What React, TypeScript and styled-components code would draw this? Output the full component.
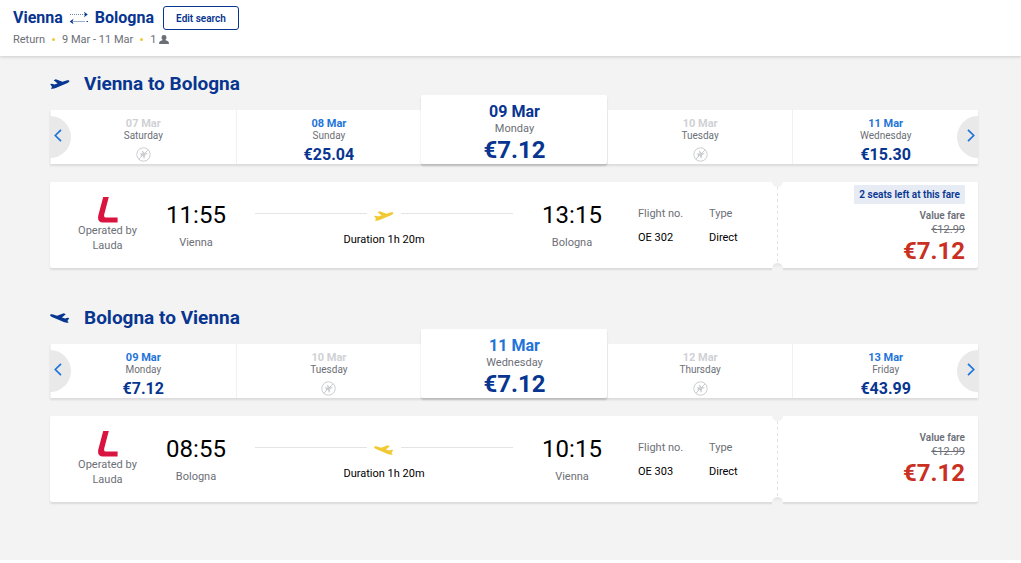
import React from "react";
import styled, { createGlobalStyle } from "styled-components";

const navy = "#073590";
const blue = "#1e74d8";
const grey = "#6c6f76";
const yellow = "#f1c933";

const GlobalStyle = createGlobalStyle`
  *, *::before, *::after { box-sizing: border-box; }
  body {
    margin: 0;
    background: #fff;
    color: #000;
    font-family: Roboto, "Liberation Sans", sans-serif;
    font-size: 11px;
    line-height: 16px;
  }
  h1, h2, p, dl, dt, dd, ul { margin: 0; padding: 0; }
  button { font-family: inherit; cursor: pointer; }
  svg { display: block; flex: none; }
`;

const Header = styled.header`
  position: relative;
  background: #fff;
  padding: 6px 13px 8px;
  box-shadow: 0 1px 3px rgba(0, 0, 0, 0.16);
`;

const TitleRow = styled.div`
  display: flex;
  align-items: center;
  gap: 9px;
`;

const RouteTitle = styled.h1`
  display: flex;
  align-items: center;
  gap: 6px;
  font-size: 16px;
  line-height: 24px;
  font-weight: 700;
  color: ${navy};
`;

const EditButton = styled.button`
  min-width: 76px;
  height: 24px;
  padding: 0 12px;
  border: 1px solid ${navy};
  border-radius: 3px;
  background: #fff;
  color: ${navy};
  font-size: 10px;
  font-weight: 600;
`;

const TripMeta = styled.p`
  display: flex;
  align-items: center;
  margin-top: 2px;
  color: ${grey};
`;

const Dot = styled.span`
  width: 3px;
  height: 3px;
  margin: 0 7px 2px;
  border-radius: 50%;
  background: ${yellow};
`;

const Passengers = styled.span`
  display: flex;
  align-items: center;
  gap: 3px;

  svg { margin-bottom: 2px; }
`;

const Main = styled.main`
  display: flex;
  flex-direction: column;
  gap: 38px;
  padding: 16px 43px 58px 50px;
  background: #f3f3f3;
`;

const JourneyHeading = styled.h2`
  display: flex;
  align-items: center;
  gap: 14px;
  margin-bottom: 14px;
  font-size: 19px;
  line-height: 24px;
  font-weight: 700;
  color: ${navy};
`;

const Carousel = styled.div`
  position: relative;
`;

const DateList = styled.ul`
  display: grid;
  grid-template-columns: repeat(5, 1fr);
  align-items: end;
  list-style: none;
  background: #fff;
  box-shadow: 0 2px 2px rgba(0, 0, 0, 0.1);
`;

const DateCard = styled.button<{ $selected?: boolean }>`
  position: relative;
  display: flex;
  flex-direction: column;
  align-items: center;
  width: 100%;
  height: ${(p) => (p.$selected ? 69 : 54)}px;
  margin-top: ${(p) => (p.$selected ? -15 : 0)}px;
  padding: ${(p) => (p.$selected ? 7 : 8)}px 0 0;
  border: 0;
  border-left: 1px solid ${(p) => (p.$selected ? "#fff" : "#f1f1f1")};
  border-radius: ${(p) => (p.$selected ? 2 : 0)}px;
  background: #fff;
  box-shadow: ${(p) => (p.$selected ? "0 2px 2px rgba(0, 0, 0, 0.16)" : "none")};
  z-index: ${(p) => (p.$selected ? 1 : 0)};
`;

const DateText = styled.span<{ $selected?: boolean; $color: string }>`
  font-size: ${(p) => (p.$selected ? 16 : 11)}px;
  line-height: ${(p) => (p.$selected ? 19 : 12)}px;
  font-weight: 700;
  color: ${(p) => p.$color};
`;

const WeekdayText = styled.span<{ $selected?: boolean }>`
  font-size: ${(p) => (p.$selected ? 11 : 10)}px;
  line-height: ${(p) => (p.$selected ? 16 : 12)}px;
  color: ${grey};
`;

const PriceText = styled.span<{ $selected?: boolean }>`
  font-size: ${(p) => (p.$selected ? 24 : 16)}px;
  line-height: ${(p) => (p.$selected ? 27 : 26)}px;
  font-weight: 700;
  color: ${navy};
`;

const NoFlight = styled.span`
  padding-top: 5px;
`;

const ArrowButton = styled.button<{ $side: "left" | "right" }>`
  position: absolute;
  z-index: 2;
  top: 6px;
  ${(p) => p.$side}: 0;
  display: grid;
  place-items: center;
  width: 21px;
  height: 42px;
  padding: 0 0 3px;
  padding-${(p) => p.$side === "left" ? "right" : "left"}: 6px;
  border: 0;
  border-radius: ${(p) => (p.$side === "left" ? "0 21px 21px 0" : "21px 0 0 21px")};
  background: #e9e9e9;
`;

const Ticket = styled.article`
  position: relative;
  display: flex;
  min-height: 86px;
  margin-top: 18px;
  border-radius: 2px;
  background: #fff;
  box-shadow: 0 2px 2px rgba(0, 0, 0, 0.1);
`;

const Operator = styled.div`
  display: flex;
  flex-direction: column;
  align-items: center;
  width: 115px;
  padding-top: 15px;
  line-height: 15px;
  text-align: center;
  color: ${grey};
`;

const Stop = styled.div`
  width: 62px;
  padding-top: 19px;
  text-align: center;
`;

const StopTime = styled.p`
  font-size: 24px;
  line-height: 28px;
`;

const StopCity = styled.p`
  margin-top: 6px;
  color: ${grey};
`;

const Path = styled.div`
  flex: 1;
  padding: 26px 28px 0;
  text-align: center;
`;

const PathLine = styled.div`
  display: flex;
  align-items: center;
  gap: 7px;
  height: 15px;
  margin-bottom: 9px;

  &::before, &::after {
    content: "";
    flex: 1;
    height: 1px;
    margin-bottom: 5px;
    background: #e4e4e4;
  }
`;

const Details = styled.dl`
  display: grid;
  grid-template-columns: 71px 68px;
  align-content: start;
  padding: 24px 0 0 35px;
`;

const Detail = styled.div`
  dt { color: ${grey}; }
  dd { margin-top: 8px; }
`;

const Fare = styled.div`
  position: relative;
  display: flex;
  flex-direction: column;
  align-items: flex-end;
  justify-content: center;
  width: 201px;
  padding-right: 13px;
  color: ${grey};
  line-height: 14px;
`;

const Perforation = styled.span`
  position: absolute;
  top: 5px;
  bottom: 5px;
  left: 0;
  width: 1px;
  background: repeating-linear-gradient(#e3e3e3 0 3px, transparent 3px 6px);
`;

const Notch = styled.span<{ $edge: "top" | "bottom" }>`
  position: absolute;
  ${(p) => p.$edge}: -5px;
  left: -5px;
  width: 11px;
  height: 10px;
  border-radius: ${(p) => (p.$edge === "top" ? "0 0 6px 6px" : "6px 6px 0 0")};
  background: ${(p) => (p.$edge === "top" ? "#f3f3f3" : "linear-gradient(#e2e2e2, #f3f3f3 5px)")};
`;

const SeatsBadge = styled.p`
  margin-bottom: 5px;
  padding: 0 5px;
  border-radius: 1px;
  background: #e6ebf4;
  color: ${navy};
  font-size: 10px;
  line-height: 19px;
  font-weight: 600;
`;

const FareName = styled.p`
  font-size: 10px;
  font-weight: 600;
`;

const FarePrice = styled.p`
  color: #c9301f;
  font-size: 24px;
  line-height: 28px;
  font-weight: 700;
`;

const Plane = ({ color, mirrored }: { color: string; mirrored?: boolean }) => (
  <svg width="20" height="10" viewBox="0 0 20 10" aria-hidden="true">
    <path
      transform={mirrored ? "translate(19.5 0) scale(-1 1)" : undefined}
      fill={color}
      d="M.2 5.1 2 4.7 4.300 5.600 7.600 4.400 3.700 1.200 5.800.3 12.400 2.700 16.400 1.400C18.200.9 19.400 1.200 19.400 2.100 19.400 3 18.200 3.800 17 4.300L11.600 6.600 5.800 9C4 9.700 2 9.900.8 9.400L2.100 8Z"
    />
  </svg>
);

const SwapArrows = () => (
  <svg width="20" height="14" viewBox="0 0 20 14" fill="none" stroke={navy} aria-hidden="true">
    <path d="M1 3.500H16" strokeDasharray="1 1" opacity=".6" />
    <path d="M15 .8 18.800 3.500 15 6.200 16 3.500Z" fill={navy} stroke="none" />
    <path d="M4 10.500H16" opacity=".4" />
    <path d="M17.500 10.500H19" />
    <path d="M4.500 7.800.7 10.500 4.500 13.200 3.500 10.500Z" fill={navy} stroke="none" />
  </svg>
);

const Person = () => (
  <svg width="10" height="9" viewBox="0 0 10 9" fill={grey} aria-hidden="true">
    <path d="M5 0a2.500 2.500 0 0 1 2.500 2.600C7.500 3.800 6.900 4.700 6.300 5.100L9 6.200Q10 6.700 10 9H0Q0 6.700 1 6.200L3.700 5.100C3.100 4.700 2.500 3.800 2.500 2.600A2.500 2.500 0 0 1 5 0Z" />
  </svg>
);

const NoFlightIcon = () => (
  <svg width="15" height="15" viewBox="0 0 15 15" fill="none" stroke="#cbcdd0" role="img" aria-label="No flights">
    <circle cx="7.500" cy="7.500" r="6.700" />
    <path d="M2.800 12.200 12.200 2.800" />
    <path fill="#cbcdd0" stroke="none" d="M3.600 6.200 6.800 6.600 5.800 4 6.700 3.700 8.800 6.300 11.300 5.900 11.500 6.800 9.100 8 8.600 11.300 7.700 11.500 6.900 8.700 4.400 9.600 5 8Z" />
  </svg>
);

const LaudaLogo = () => (
  <svg width="20" height="26" viewBox="0 0 20 26" fill="#d9143f" role="img" aria-label="Lauda">
    <path d="M5.200 0H10.800L6.200 17.600Q5.600 20.500 8 20.500H19.600V25.600H5Q-1 25.400.3 18.400Z" />
  </svg>
);

const Chevron = ({ side }: { side: "left" | "right" }) => (
  <svg width="8" height="13" viewBox="0 0 8 13" fill="none" stroke={blue} strokeWidth="1.700" aria-hidden="true">
    <path d={side === "left" ? "M7 .8 1.300 6.500 7 12.200" : "M1 .8 6.700 6.500 1 12.200"} />
  </svg>
);

type Day = { date: string; weekday: string; price?: string; selected?: boolean; color?: string };
type Journey = {
  from: string; to: string; inbound?: boolean; days: Day[];
  departs: string; arrives: string; flight: string; badge?: string;
};

const journeys: Journey[] = [
  {
    from: "Vienna", to: "Bologna", departs: "11:55", arrives: "13:15", flight: "OE 302",
    badge: "2 seats left at this fare",
    days: [
      { date: "07 Mar", weekday: "Saturday" },
      { date: "08 Mar", weekday: "Sunday", price: "€25.04" },
      { date: "09 Mar", weekday: "Monday", price: "€7.12", selected: true, color: navy },
      { date: "10 Mar", weekday: "Tuesday" },
      { date: "11 Mar", weekday: "Wednesday", price: "€15.30" },
    ],
  },
  {
    from: "Bologna", to: "Vienna", inbound: true, departs: "08:55", arrives: "10:15", flight: "OE 303",
    days: [
      { date: "09 Mar", weekday: "Monday", price: "€7.12" },
      { date: "10 Mar", weekday: "Tuesday" },
      { date: "11 Mar", weekday: "Wednesday", price: "€7.12", selected: true },
      { date: "12 Mar", weekday: "Thursday" },
      { date: "13 Mar", weekday: "Friday", price: "€43.99" },
    ],
  },
];

const JourneySection = ({ journey: j }: { journey: Journey }) => (
  <section>
    <JourneyHeading>
      <Plane color={navy} mirrored={j.inbound} />
      {j.from} to {j.to}
    </JourneyHeading>
    <Carousel>
      <ArrowButton $side="left" aria-label="Earlier dates"><Chevron side="left" /></ArrowButton>
      <DateList>
        {j.days.map((d) => (
          <li key={d.date}>
            <DateCard $selected={d.selected} disabled={!d.price}>
              <DateText $selected={d.selected} $color={d.price ? d.color ?? blue : "#cfd1d4"}>{d.date}</DateText>
              <WeekdayText $selected={d.selected}>{d.weekday}</WeekdayText>
              {d.price ? <PriceText $selected={d.selected}>{d.price}</PriceText> : <NoFlight><NoFlightIcon /></NoFlight>}
            </DateCard>
          </li>
        ))}
      </DateList>
      <ArrowButton $side="right" aria-label="Later dates"><Chevron side="right" /></ArrowButton>
    </Carousel>
    <Ticket>
      <Operator>
        <LaudaLogo />
        <p>Operated by<br />Lauda</p>
      </Operator>
      <Stop>
        <StopTime>{j.departs}</StopTime>
        <StopCity>{j.from}</StopCity>
      </Stop>
      <Path>
        <PathLine><Plane color={yellow} mirrored={j.inbound} /></PathLine>
        <p>Duration 1h 20m</p>
      </Path>
      <Stop>
        <StopTime>{j.arrives}</StopTime>
        <StopCity>{j.to}</StopCity>
      </Stop>
      <Details>
        <Detail><dt>Flight no.</dt><dd>{j.flight}</dd></Detail>
        <Detail><dt>Type</dt><dd>Direct</dd></Detail>
      </Details>
      <Fare>
        <Perforation />
        <Notch $edge="top" />
        <Notch $edge="bottom" />
        {j.badge && <SeatsBadge>{j.badge}</SeatsBadge>}
        <FareName>Value fare</FareName>
        <s>€12.99</s>
        <FarePrice>€7.12</FarePrice>
      </Fare>
    </Ticket>
  </section>
);

export default function App() {
  return (
    <>
      <GlobalStyle />
      <Header>
        <TitleRow>
          <RouteTitle><span>Vienna</span><SwapArrows /><span>Bologna</span></RouteTitle>
          <EditButton>Edit search</EditButton>
        </TitleRow>
        <TripMeta>
          Return<Dot />9 Mar - 11 Mar<Dot /><Passengers>1<Person /></Passengers>
        </TripMeta>
      </Header>
      <Main>
        {journeys.map((j) => <JourneySection key={j.from} journey={j} />)}
      </Main>
    </>
  );
}
